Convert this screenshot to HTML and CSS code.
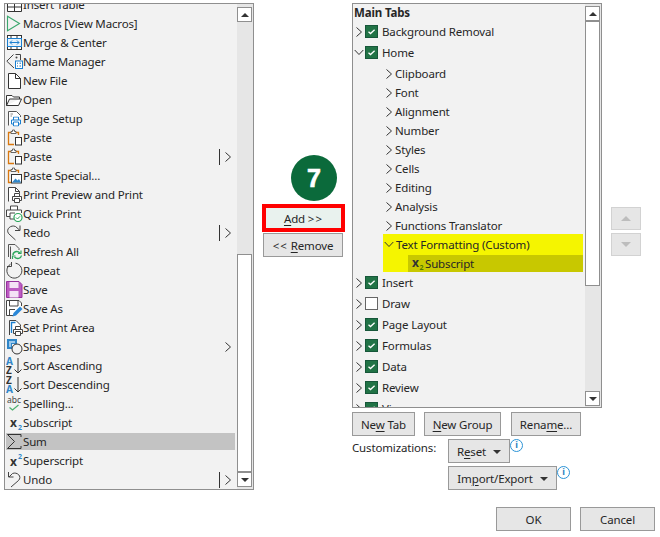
FILE: index.html
```html
<!DOCTYPE html>
<html lang="en">
<head>
<meta charset="utf-8">
<title>Customize Ribbon</title>
<link rel="stylesheet" href="styles.css">
</head>
<body>
<svg class="defs" width="0" height="0" aria-hidden="true">
  <symbol id="paste" viewBox="0 0 17 17">
    <path d="M5 3.5H2.5V15.5H8" fill="none" stroke="#d9780f" stroke-width="1.3"/>
    <path d="M12.5 6V3.5H10" fill="none" stroke="#d9780f" stroke-width="1.3"/>
    <path d="M5 4.5V2.5H6.5V1H8.5V2.5H10V4.5Z" fill="#fff" stroke="#555" stroke-width=".9"/>
    <rect x="9.5" y="8.5" width="6" height="7.5" fill="#fff" stroke="#333"/>
  </symbol>
  <symbol id="printer" viewBox="0 0 10 10">
    <path d="M2.5 3.5V.5H7.5V3.5M2.5 7.5H.5V3.5H9.5V7.5H7.5M2.5 5.5H7.5V9.5H2.5Z" fill="#fff" stroke="currentColor"/>
  </symbol>
  <symbol id="chev-r" viewBox="0 0 8 12"><path d="M1.5 1.5L6.5 6L1.5 10.5" fill="none" stroke="#333" stroke-width="1"/></symbol>
  <symbol id="chev-d" viewBox="0 0 10 7"><path d="M.7 1L5 5.5L9.3 1" fill="none" stroke="#333" stroke-width="1"/></symbol>
  <symbol id="chk" viewBox="0 0 13 13"><rect x=".5" y=".5" width="12" height="12" fill="#217346" stroke="#17573a"/><path d="M3.5 6.8L5.5 8.6L9.6 4.8" fill="none" stroke="#fff" stroke-width="1.3"/></symbol>
</svg>

<main class="dialog">
  <section class="list-panel">
    <div class="list">
      <ul class="commands">
        <li class="cmd clipped"><svg class="ic" viewBox="0 0 17 17"><path d="M1.5 1.5H15.5V15.5H1.5ZM1.5 6.5H15.5M1.5 11H15.5M8.5 6.5V15.5" fill="#fff" stroke="#333"/></svg>Insert Table</li>
        <li class="cmd"><svg class="ic" viewBox="0 0 17 17"><path d="M1.5 1.2L13.5 8.5L1.5 15.8Z" fill="none" stroke="#3aa76d" stroke-width="1.1"/></svg>Macros [View Macros]</li>
        <li class="cmd"><svg class="ic" viewBox="0 0 17 17"><rect x="1.5" y="1.5" width="14" height="14" fill="#fff" stroke="#333"/><path d="M5 1.5V4.5M11 1.5V4.5M5 12.5V15.5M11 12.5V15.5" stroke="#333" fill="none"/><rect x="1.5" y="4.5" width="14" height="8" fill="#e4f0fa" stroke="#1a7fd0"/><path d="M4 8.5H13M6 6.5L4 8.5L6 10.5M11 6.5L13 8.5L11 10.5" fill="none" stroke="#1a7fd0"/></svg>Merge &amp; Center</li>
        <li class="cmd"><svg class="ic" viewBox="0 0 17 17"><path d="M9.5 1.5H14.5V7M8 15L.8 8.2L7.5 1.5" fill="none" stroke="#444"/><circle cx="10.5" cy="4.5" r="1" fill="#444"/><rect x="9.5" y="8" width="7" height="7.5" fill="#fff" stroke="#1a7fd0"/><path d="M11 10.2H12M13.5 10.2H15M11 13H12M13.5 13H15" stroke="#1a6fb0"/></svg>Name Manager</li>
        <li class="cmd"><svg class="ic" viewBox="0 0 17 17"><path d="M2.5 1.5H9.5L14.5 6.5V16.5H2.5Z" fill="#fff" stroke="#333"/><path d="M9.5 1.5V6.5H14.5" fill="none" stroke="#333"/></svg>New File</li>
        <li class="cmd"><svg class="ic" viewBox="0 0 17 17"><path d="M.5 14.5V4.5H6L7.5 6H13.5V8M.5 14.5H12.5L15.5 8H3.5Z" fill="#fff" stroke="#333"/></svg>Open</li>
        <li class="cmd"><svg class="ic" viewBox="0 0 17 17"><path d="M2.5 15.5V1.5H10.5L14.5 5.5V7" fill="#fff" stroke="#555"/><path d="M4.5 4H7M4.5 6H6" stroke="#888"/><svg x="5" y="6.5" width="10" height="10" class="blue"><use href="#printer"/></svg></svg>Page Setup</li>
        <li class="cmd"><svg class="ic"><use href="#paste"/></svg>Paste</li>
        <li class="cmd sub sep"><svg class="ic"><use href="#paste"/></svg>Paste<span class="bar"></span><svg class="more"><use href="#chev-r"/></svg></li>
        <li class="cmd"><svg class="ic" viewBox="0 0 17 17"><path d="M5 3.5H2.5V15.5H5" fill="none" stroke="#d9780f" stroke-width="1.3"/><path d="M12.5 6V3.5H10" fill="none" stroke="#d9780f" stroke-width="1.3"/><path d="M5 4.5V2.5H6.5V1H8.5V2.5H10V4.5Z" fill="#fff" stroke="#555" stroke-width=".9"/><rect x="5.5" y="7.5" width="10" height="8.5" fill="#fff" stroke="#333"/><path d="M6 15.5L9.5 11.5L11.5 13.5L13 12L15 15.5Z" fill="#2f86c9"/></svg>Paste Special...</li>
        <li class="cmd"><svg class="ic" viewBox="0 0 17 17"><path d="M2.5 15.5V1.5H9.5L13.5 5.5V7" fill="#fff" stroke="#444"/><path d="M9.5 1.5V5.5H13.5" fill="none" stroke="#444"/><svg x="6" y="7" width="10" height="10" class="dark"><use href="#printer"/></svg></svg>Print Preview and Print</li>
        <li class="cmd"><svg class="ic" viewBox="0 0 17 17"><path d="M4.5 5V1H11.5V5M4 11.5H.5V5H15.5V8M4 8H9M4 8V14H8" fill="#fff" stroke="#444"/><circle cx="12" cy="12.5" r="4" fill="#fff" stroke="#2ea85e" stroke-width="1.2"/><path d="M10 12.5L11.5 14L14 11.3" fill="none" stroke="#2ea85e"/></svg>Quick Print</li>
        <li class="cmd sub sep"><svg class="ic" viewBox="0 0 17 17"><path d="M9.5 16L2.5 9.5C-.5 5 5 .5 9.5 2.5L13.5 6" fill="none" stroke="#444"/><path d="M14 1.5V6.5H9" fill="none" stroke="#444"/></svg>Redo<span class="bar"></span><svg class="more"><use href="#chev-r"/></svg></li>
        <li class="cmd"><svg class="ic" viewBox="0 0 17 17"><path d="M2.5 14V1.5H9L13 5.5V7" fill="none" stroke="#555"/><path d="M4.5 16V3.5" stroke="#555"/><path d="M7 12C7 9 11 7 14 10M15.5 12.5C15 15.5 11 16.5 8.5 14" fill="none" stroke="#2ea85e" stroke-width="1.4"/><path d="M15 7.5V10.5H12M6.5 16V13H9.5" fill="none" stroke="#2ea85e" stroke-width="1.2"/></svg>Refresh All</li>
        <li class="cmd"><svg class="ic" viewBox="0 0 17 17"><path d="M9.5 1.2A7.5 7.5 0 1 1 4.5 2.2" fill="none" stroke="#444"/><path d="M5.5 0V4.5H1" fill="none" stroke="#444"/></svg>Repeat</li>
        <li class="cmd"><svg class="ic" viewBox="0 0 17 17"><path d="M.5 .5H13L16 3.5V16.5H.5Z" fill="#bd5cc2" stroke="#96319d"/><rect x="3.5" y="1" width="9" height="6" fill="#f4e3f5"/><rect x="3.5" y="10" width="9" height="6.5" fill="#f4e3f5"/></svg>Save</li>
        <li class="cmd"><svg class="ic" viewBox="0 0 17 17"><path d="M7 15.5H.5V.5H13L15.5 3V6" fill="#fff" stroke="#444"/><path d="M3.5 1V6H12V1M3.5 15V9.5H9" fill="none" stroke="#444"/><path d="M6.5 16.5L7.5 13L14 6.5L16.5 9L10 15.5Z" fill="#2b88d8"/></svg>Save As</li>
        <li class="cmd"><svg class="ic" viewBox="0 0 17 17"><path d="M3.5 16V1.5H10L14.5 6V7" fill="#fff" stroke="#444"/><path d="M5.5 14V3.5H9.5" fill="none" stroke="#1a7fd0" stroke-width="1.4"/><svg x="7" y="7" width="10" height="10" class="dark"><use href="#printer"/></svg></svg>Set Print Area</li>
        <li class="cmd sub"><svg class="ic" viewBox="0 0 17 17"><path d="M1 1H11V6H6V11H1Z" fill="#2f86c9"/><path d="M3 3H9V5H5V9H3Z" fill="#9cc9ec"/><circle cx="11" cy="11" r="5" fill="#f2f2f2" stroke="#333"/></svg>Shapes<svg class="more"><use href="#chev-r"/></svg></li>
        <li class="cmd"><svg class="ic"><text x="0" y="8" class="ltr blue-t">A</text><text x="0" y="16.5" class="ltr dark-t">Z</text><path d="M12 1V16M8.5 12.5L12 16L15.5 12.5" fill="none" stroke="#333"/></svg>Sort Ascending</li>
        <li class="cmd"><svg class="ic"><text x="0" y="8" class="ltr dark-t">Z</text><text x="0" y="16.5" class="ltr blue-t">A</text><path d="M12 1V16M8.5 12.5L12 16L15.5 12.5" fill="none" stroke="#333"/></svg>Sort Descending</li>
        <li class="cmd"><svg class="ic"><text x="1" y="8" class="abc">abc</text><path d="M3.5 12.5L6.5 15L12.5 10" fill="none" stroke="#4caf6e" stroke-width="1.2"/></svg>Spelling...</li>
        <li class="cmd"><svg class="ic"><text x="4" y="13" class="x">x</text><text x="12" y="16" class="n2 blue-t">2</text></svg>Subscript</li>
        <li class="cmd on"><svg class="ic" viewBox="0 0 17 17"><path d="M15 4V1.5H1.5L8.5 8.5L1.5 15.5H15V13" fill="none" stroke="#333"/></svg>Sum</li>
        <li class="cmd"><svg class="ic"><text x="4" y="14" class="x">x</text><text x="12" y="7" class="n2 blue-t">2</text></svg>Superscript</li>
        <li class="cmd sub sep"><svg class="ic" viewBox="0 0 17 17"><path d="M5 16L12.5 9.5C16.5 5.5 11 0.5 6.5 2.5L3 6" fill="none" stroke="#444"/><path d="M2.5 1V6H7.5" fill="none" stroke="#444"/></svg>Undo<span class="bar"></span><svg class="more"><use href="#chev-r"/></svg></li>
      </ul>
    </div>
    <div class="scroll scroll-left">
      <div class="sb-btn"><span class="up"></span></div>
      <div class="sb-track sb-track-left"></div>
      <div class="sb-thumb sb-thumb-left"></div>
      <div class="sb-btn"><span class="down"></span></div>
    </div>
  </section>

  <section class="mid">
    <div class="step">7</div>
    <button class="btn add"><u>A</u>dd <span class="sp">&gt;&gt;</span></button>
    <button class="btn remove"><span class="sp">&lt;&lt;</span> <u>R</u>emove</button>
  </section>

  <section class="right">
    <div class="tree-row">
      <div class="list-panel tree-panel">
        <div class="tree">
          <div class="tree-head">Main Tabs</div>
          <div class="tab"><svg class="cr"><use href="#chev-r"/></svg><svg class="cb"><use href="#chk"/></svg>Background Removal</div>
          <div class="tab"><svg class="cd"><use href="#chev-d"/></svg><svg class="cb"><use href="#chk"/></svg>Home</div>
          <div class="grp first"><svg class="cr"><use href="#chev-r"/></svg>Clipboard</div>
          <div class="grp"><svg class="cr"><use href="#chev-r"/></svg>Font</div>
          <div class="grp"><svg class="cr"><use href="#chev-r"/></svg>Alignment</div>
          <div class="grp"><svg class="cr"><use href="#chev-r"/></svg>Number</div>
          <div class="grp"><svg class="cr"><use href="#chev-r"/></svg>Styles</div>
          <div class="grp"><svg class="cr"><use href="#chev-r"/></svg>Cells</div>
          <div class="grp"><svg class="cr"><use href="#chev-r"/></svg>Editing</div>
          <div class="grp"><svg class="cr"><use href="#chev-r"/></svg>Analysis</div>
          <div class="grp"><svg class="cr"><use href="#chev-r"/></svg>Functions Translator</div>
          <div class="custom-group">
            <div class="cg-title"><svg class="cd"><use href="#chev-d"/></svg>Text Formatting (Custom)</div>
            <div class="cg-item"><svg class="cg-ic"><text x="4" y="12" class="x">x</text><text x="11.5" y="14.5" class="n2 olive-t">2</text></svg>Subscript</div>
          </div>
          <div class="tab"><svg class="cr"><use href="#chev-r"/></svg><svg class="cb"><use href="#chk"/></svg>Insert</div>
          <div class="tab"><svg class="cr"><use href="#chev-r"/></svg><span class="cb-empty"></span>Draw</div>
          <div class="tab"><svg class="cr"><use href="#chev-r"/></svg><svg class="cb"><use href="#chk"/></svg>Page Layout</div>
          <div class="tab"><svg class="cr"><use href="#chev-r"/></svg><svg class="cb"><use href="#chk"/></svg>Formulas</div>
          <div class="tab"><svg class="cr"><use href="#chev-r"/></svg><svg class="cb"><use href="#chk"/></svg>Data</div>
          <div class="tab"><svg class="cr"><use href="#chev-r"/></svg><svg class="cb"><use href="#chk"/></svg>Review</div>
          <div class="tab"><svg class="cr"><use href="#chev-r"/></svg><svg class="cb"><use href="#chk"/></svg>View</div>
        </div>
        <div class="scroll scroll-right">
          <div class="sb-btn"><span class="up"></span></div>
          <div class="sb-thumb sb-thumb-right"></div>
          <div class="sb-track sb-track-right"></div>
          <div class="sb-btn"><span class="down"></span></div>
        </div>
      </div>
      <div class="updown">
        <button class="move"><span class="up-l"></span></button>
        <button class="move"><span class="down-l"></span></button>
      </div>
    </div>
    <div class="tree-actions">
      <button class="btn new-tab">Ne<u>w</u> Tab</button>
      <button class="btn new-group"><u>N</u>ew Group</button>
      <button class="btn rename">Rena<u>m</u>e...</button>
    </div>
    <div class="customs">
      <span class="c-label">Customizations:</span>
      <div class="c-stack">
        <div class="c-line"><button class="btn reset">R<u>e</u>set<span class="caret"></span></button><span class="info">i</span></div>
        <div class="c-line"><button class="btn import">Im<u>p</u>ort/Export<span class="caret"></span></button><span class="info">i</span></div>
      </div>
    </div>
    <div class="footer">
      <button class="btn foot">OK</button>
      <button class="btn foot">Cancel</button>
    </div>
  </section>
</main>
</body>
</html>
```
FILE: styles.css
```css
* { box-sizing: border-box; }
html, body { margin: 0; padding: 0; background: #fff; }
body { width: 660px; height: 537px; overflow: hidden; font: 11.5px/17px "Noto Sans", "Liberation Sans", sans-serif; letter-spacing: -.15px; color: #262626; }
.defs { position: absolute; }
ul { list-style: none; margin: 0; padding: 0; }
u { text-decoration-thickness: 1px; text-underline-offset: 2px; }

.dialog { display: flex; padding: 3px 0 0 4px; }

.list-panel { display: flex; width: 250px; height: 487px; background: #f2f2f2; border: 1px solid #8f8f8f; }
.list { flex: 1; overflow: hidden; }
.commands { margin-top: -8px; }
.cmd { display: flex; align-items: center; height: 17px; margin: 0 0 2px 1px; width: 229px; white-space: nowrap; }
.cmd.on { background: #c3c3c3; }
.ic { width: 17px; height: 17px; flex: none; }
.blue { color: #1a7fd0; }
.dark { color: #444; }
.sub { position: relative; }
.bar { width: 1px; height: 16px; background: #333; margin-left: auto; margin-right: 4px; }
.more { width: 8px; height: 12px; margin-right: 3px; }
.cmd.sub:not(.sep) .more { margin-left: auto; }
.ltr { font: bold 10px "Noto Sans", sans-serif; letter-spacing: 0; }
.blue-t { fill: #2f86c9; }
.dark-t { fill: #333; }
.olive-t { fill: #4f7a00; }
.abc { font: 8.5px "Noto Sans", sans-serif; letter-spacing: 0; fill: #444; }
.x { font: bold 12px "Noto Sans", sans-serif; letter-spacing: 0; fill: #333; }
.n2 { font: bold 7px "Noto Sans", sans-serif; letter-spacing: 0; }

.scroll { width: 16px; flex: none; display: flex; flex-direction: column; background: #e6e6e6; padding: 3px 1px 2px 0; }
.scroll-right { padding-top: 2px; padding-bottom: 1px; }
.sb-btn { height: 15px; background: #fff; border: 1px solid #8f8f8f; display: flex; align-items: center; justify-content: center; flex: none; }
.up, .up-l { width: 0; height: 0; border: 4px solid transparent; border-top: 0; border-bottom: 4px solid #333; }
.down { width: 0; height: 0; border: 4px solid transparent; border-bottom: 0; border-top: 4px solid #333; }
.up-l { display: block; border-bottom-color: #bdbdbd; border-left-width: 5px; border-right-width: 5px; border-bottom-width: 5px; }
.down-l { display: block; width: 0; height: 0; border: 5px solid transparent; border-bottom: 0; border-top: 5px solid #bdbdbd; }
.sb-thumb { background: #fff; border: 1px solid #8f8f8f; flex: none; }
.sb-track-left { height: 233px; }
.sb-thumb-left { height: 218px; }
.sb-track-right { flex: 1; }
.sb-thumb-right { height: 265px; }

.mid { width: 98px; flex: none; display: flex; flex-direction: column; align-items: flex-start; padding-top: 152px; }
.step { width: 46px; height: 46px; margin-left: 37px; border-radius: 50%; background: #0b6a3b; color: #fff; font: bold 25px/46px "Liberation Sans", sans-serif; letter-spacing: 0; -webkit-text-stroke: .7px #fff; text-align: center; }
.btn { font: 11.5px/17px "Noto Sans", "Liberation Sans", sans-serif; letter-spacing: -.15px; color: #262626; background: #e6e6e6; border: 1px solid #999; padding: 0; height: 24px; flex: none; }
.add { width: 83px; height: 28px; margin: 3px 0 0 8px; border: 4px solid #f00; background: #e9f2ee; }
.remove { width: 80px; margin: 1px 0 0 9px; }
.sp { letter-spacing: 1px; }

.right { width: 303px; flex: none; }
.tree-row { display: flex; }
.tree-panel { width: 250px; height: 405px; flex: none; }
.tree { flex: 1; overflow: hidden; }
.tree-head { height: 17px; padding-left: 1px; font-weight: 700; }
.tab { display: flex; align-items: center; height: 21px; white-space: nowrap; }
.tab .cr { margin-left: 2px; }
.tab .cd { margin-left: 1px; }
.cr { width: 8px; height: 12px; flex: none; }
.cd { width: 10px; height: 7px; flex: none; }
.cb { width: 13px; height: 13px; margin: 0 4px 0 2px; flex: none; }
.tab .cd + .cb { margin-left: 1px; }
.cb-empty { width: 13px; height: 13px; margin: 0 4px 0 2px; background: #fff; border: 1px solid #666; flex: none; }
.grp { display: flex; align-items: center; height: 19px; padding-left: 32px; gap: 2px; white-space: nowrap; }
.grp.first { margin-top: 1px; }
.custom-group { width: 200px; height: 38px; margin: -1px 0 0 30px; background: #f5f500; }
.cg-title { display: flex; align-items: center; height: 21px; padding-left: 1px; gap: 2px; }
.cg-item { display: flex; align-items: center; height: 17px; margin-left: 25px; background: #c8c800; white-space: nowrap; }
.cg-ic { width: 17px; height: 17px; flex: none; }

.updown { display: flex; flex-direction: column; gap: 3px; margin: 204px 0 0 9px; }
.move { width: 30px; height: 23px; background: #e6e6e6; border: 1px solid #d2d2d2; padding: 0; display: flex; align-items: center; justify-content: center; }

.tree-actions { display: flex; margin-top: 4px; }
.new-tab { width: 63px; }
.new-group { width: 77px; margin-left: 9px; }
.rename { width: 70px; margin-left: 10px; }

.customs { display: flex; margin-top: 3px; }
.c-label { width: 96px; line-height: 18px; }
.c-stack { display: flex; flex-direction: column; gap: 3px; }
.c-line { display: flex; align-items: flex-start; gap: 0; }
.reset { width: 62px; }
.import { width: 109px; }
.caret { display: inline-block; width: 0; height: 0; margin-left: 7px; vertical-align: 2px; border: 4px solid transparent; border-bottom: 0; border-top: 4px solid #333; }
.info { width: 13px; height: 13px; border: 1.5px solid #2b93d6; border-radius: 50%; color: #2b7fc0; font: bold 9px/10px "Noto Sans", sans-serif; letter-spacing: 0; text-align: center; }

.footer { display: flex; justify-content: flex-end; gap: 9px; margin-top: 17px; }
.foot { width: 75px; }
```
